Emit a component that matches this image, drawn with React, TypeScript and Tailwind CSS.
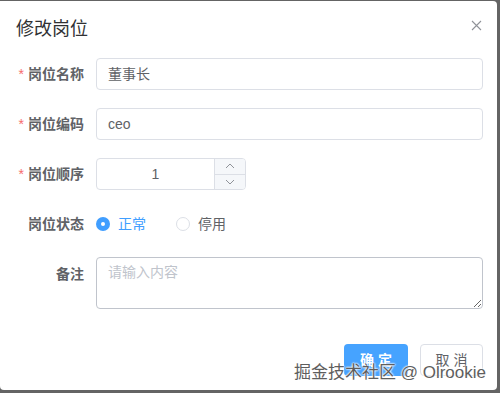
import React from 'react';

const font = '[font-family:"Liberation_Sans","Noto_Sans_CJK_SC",sans-serif]';

function Label({ text, required }: { text: string; required?: boolean }) {
  return (
    <div className="w-[80px] shrink-0 pr-[12px] flex items-center justify-end text-[14px] font-bold text-[#606266]">
      {required && <span className="text-[#f56c6c] mr-[4px] font-normal">*</span>}
      {text}
    </div>
  );
}

function Radio({ label, checked }: { label: string; checked?: boolean }) {
  return (
    <label className="flex items-center gap-[8px] text-[14px]">
      {checked ? (
        <span className="w-[14px] h-[14px] rounded-full bg-[#409eff] flex items-center justify-center">
          <span className="w-[4px] h-[4px] rounded-full bg-white" />
        </span>
      ) : (
        <span className="w-[14px] h-[14px] rounded-full border border-[#dcdfe6] bg-white" />
      )}
      <span className={checked ? 'text-[#409eff]' : 'text-[#606266]'}>{label}</span>
    </label>
  );
}

function Chevron({ up }: { up?: boolean }) {
  return (
    <svg width="10" height="6" viewBox="0 0 10 6" fill="none" stroke="#909399" strokeWidth="1">
      {up ? <path d="M1 5 L5 1 L9 5" /> : <path d="M1 1 L5 5 L9 1" />}
    </svg>
  );
}

export default function App() {
  return (
    <div className={`w-[500px] h-[393px] bg-[#646464] pt-[1px] pr-[3px] pb-[3px] overflow-hidden ${font}`}>
      <div className="relative h-full bg-white rounded-r-[4px] rounded-bl-[4px]">
        <div className="px-[16px] pt-[16px] text-[18px] leading-[24px] text-[#303133]">修改岗位</div>
        <button className="absolute top-[18px] right-[15px] w-[12px] h-[12px] flex items-center justify-center">
          <svg width="11" height="11" viewBox="0 0 11 11" stroke="#909399" strokeWidth="1.1">
            <path d="M1 1 L10 10 M10 1 L1 10" />
          </svg>
        </button>

        <div className="pt-[17px] pl-[16px] pr-[14px] flex flex-col gap-[18px]">
          <div className="flex h-[32px]">
            <Label text="岗位名称" required />
            <div className="flex-1 border border-[#dcdfe6] rounded-[4px] px-[11px] flex items-center text-[14px] text-[#606266]">
              董事长
            </div>
          </div>
          <div className="flex h-[32px]">
            <Label text="岗位编码" required />
            <div className="flex-1 border border-[#dcdfe6] rounded-[4px] px-[11px] flex items-center text-[14px] text-[#606266]">
              ceo
            </div>
          </div>
          <div className="flex h-[32px]">
            <Label text="岗位顺序" required />
            <div className="w-[150px] border border-[#dcdfe6] rounded-[4px] flex overflow-hidden">
              <div className="flex-1 flex items-center justify-center text-[14px] text-[#606266]">1</div>
              <div className="w-[31px] border-l border-[#dcdfe6] bg-[#f5f7fa] flex flex-col">
                <div className="flex-1 flex items-center justify-center border-b border-[#dcdfe6]">
                  <Chevron up />
                </div>
                <div className="flex-1 flex items-center justify-center">
                  <Chevron />
                </div>
              </div>
            </div>
          </div>
          <div className="flex h-[32px]">
            <Label text="岗位状态" />
            <div className="flex items-center gap-[30px]">
              <Radio label="正常" checked />
              <Radio label="停用" />
            </div>
          </div>
          <div className="flex">
            <div className="w-[80px] shrink-0 pr-[12px] pt-[6px] text-right text-[14px] font-bold text-[#606266]">备注</div>
            <textarea
              readOnly
              placeholder="请输入内容"
              className="flex-1 h-[52px] -mt-[1px] border border-[#c0c4cc] rounded-[4px] px-[11px] py-[4px] text-[14px] leading-[20px] text-[#606266] placeholder:text-[#c0c4cc] outline-none"
            />
          </div>
        </div>

        <div className="flex justify-end gap-[12px] pr-[14px] pt-[35px]">
          <button className="w-[64px] h-[32px] rounded-[4px] bg-[#46a3ff] text-white text-[14px] font-bold">确 定</button>
          <button className="w-[63px] h-[32px] rounded-[4px] border border-[#dcdfe6] bg-white text-[#606266] text-[14px]">取 消</button>
        </div>

        <div className="absolute left-[294px] top-[360px] text-[17px] leading-[24px] text-[#5e5e5e] whitespace-nowrap [text-shadow:0_0_2px_#fff,0_0_2px_#fff,0_0_2px_#fff]">
          掘金技术社区 @ Olrookie
        </div>
      </div>
    </div>
  );
}
